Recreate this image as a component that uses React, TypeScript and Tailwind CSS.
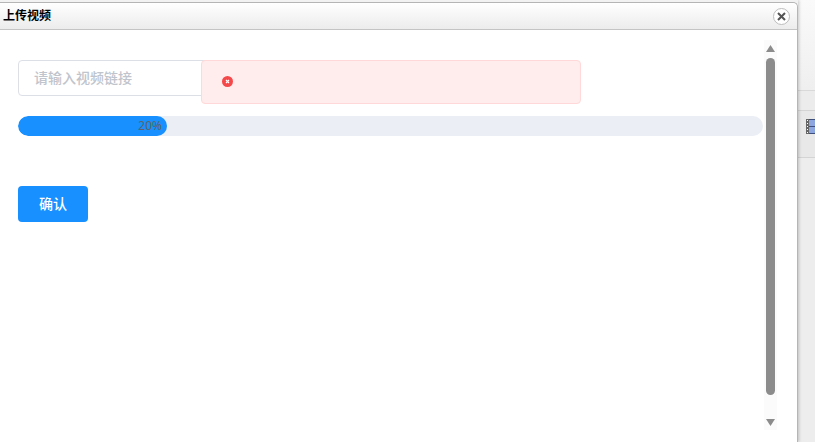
import React from 'react';

const CJK = 'font-["Liberation_Sans","Noto_Sans_CJK_SC",sans-serif]';

function CloseButton() {
    return (
        <button className="flex items-center justify-center w-[17px] h-[17px] rounded-full border border-[#bdbdbd] bg-white">
            <svg width="9" height="9" viewBox="0 0 9 9">
                <path d="M1 1 L8 8 M8 1 L1 8" stroke="#555555" strokeWidth="2" />
            </svg>
        </button>
    );
}

function Scrollbar() {
    return (
        <div className="w-[13px] h-[390px] mt-[10px] bg-[#fbfbfb] flex flex-col items-center shrink-0">
            <svg width="9" height="7" viewBox="0 0 9 7" className="mt-[5px] shrink-0">
                <path d="M4.5 0 L9 7 L0 7 Z" fill="#8c8c8c" />
            </svg>
            <div className="w-[9px] h-[337px] mt-[6px] rounded-full bg-[#8c8c8c] shrink-0"></div>
            <svg width="9" height="7" viewBox="0 0 9 7" className="mt-[24px] shrink-0">
                <path d="M4.5 7 L9 0 L0 0 Z" fill="#8c8c8c" />
            </svg>
        </div>
    );
}

function FilmIcon() {
    return (
        <svg width="9" height="15" viewBox="0 0 9 15" className="ml-[8px]">
            <rect width="9" height="15" fill="#8ea6e0" />
            <rect width="3" height="15" fill="#666666" />
            <rect x="1" y="1" width="1" height="1" fill="#ffffff" />
            <rect x="1" y="4" width="1" height="1" fill="#ffffff" />
            <rect x="1" y="7" width="1" height="1" fill="#ffffff" />
            <rect x="1" y="10" width="1" height="1" fill="#ffffff" />
            <rect x="1" y="13" width="1" height="1" fill="#ffffff" />
            <rect x="3" width="6" height="1" fill="#3f4f80" />
            <rect x="3" y="7" width="6" height="1" fill="#3f4f80" />
            <rect x="3" y="14" width="6" height="1" fill="#3f4f80" />
        </svg>
    );
}

function BackgroundStrip() {
    return (
        <div className="flex-1 flex flex-col bg-[#ebebeb]">
            <div className="h-[91px] bg-gradient-to-b from-[#fafafa] to-[#efefef] border-b border-[#d9d9d9]"></div>
            <div className="h-[20px] bg-[#ececec] border-b border-[#d4d4d4]"></div>
            <div className="h-[47px] bg-[#e8e8e8] border-b border-[#d4d4d4] pt-[8px]">
                <FilmIcon />
            </div>
            <div className="flex-1 bg-[#ededed]"></div>
        </div>
    );
}

export default function App() {
    return (
        <div className={`relative flex w-[815px] h-[442px] overflow-hidden bg-[#f2f2f2] ${CJK}`}>
            <div className="relative z-10 flex flex-col w-[798px] h-full pt-[2px] shrink-0 shadow-[1px_0_3px_rgba(0,0,0,0.2)]">
                <div className="flex flex-col flex-1 min-h-0 border-t border-r border-[#b5b5b5] rounded-tr-[5px] bg-white">
                    <div className="flex items-center justify-between h-[27px] pl-[3px] pr-[7px] border-b border-[#c4c4c4] bg-gradient-to-b from-white to-[#ececec] rounded-tr-[5px] shrink-0">
                        <span className="text-[12px] font-bold text-black">上传视频</span>
                        <CloseButton />
                    </div>
                    <div className="flex flex-1 min-h-0">
                        <div className="w-[764px] pl-[18px] pr-[1px] pt-[30px] shrink-0">
                            <div className="flex items-center w-[300px] h-[36px] pl-[16px] border border-[#dcdfe6] rounded-[4px] text-[14px] font-medium text-[#c0c4cc]">
                                <span className="-translate-x-[1px]">请输入视频链接</span>
                            </div>
                            <div className="w-[745px] h-[20px] mt-[20px] rounded-full bg-[#ebeef5] overflow-hidden">
                                <div className='flex items-center justify-end w-[149px] h-full pr-[5px] rounded-full bg-[#1890ff] font-["Noto_Sans"] text-[12px] text-[#606266]'>
                                    20%
                                </div>
                            </div>
                            <button className="block w-[70px] h-[36px] mt-[50px] rounded-[4px] bg-[#1890ff] text-[14px] font-medium text-white">
                                确认
                            </button>
                        </div>
                        <Scrollbar />
                    </div>
                </div>
            </div>
            <BackgroundStrip />
            <div className="absolute z-20 left-[201px] top-[60px] flex items-center w-[380px] h-[44px] pl-[20px] pb-[1px] border border-[#ffd9d9] rounded-[4px] bg-[#ffecec]">
                <svg width="11" height="11" viewBox="0 0 11 11">
                    <circle cx="5.5" cy="5.5" r="5.5" fill="#f5484a" />
                    <path d="M4 4 L7 7 M7 4 L4 7" stroke="#ffffff" strokeWidth="1.2" />
                </svg>
            </div>
        </div>
    );
}
